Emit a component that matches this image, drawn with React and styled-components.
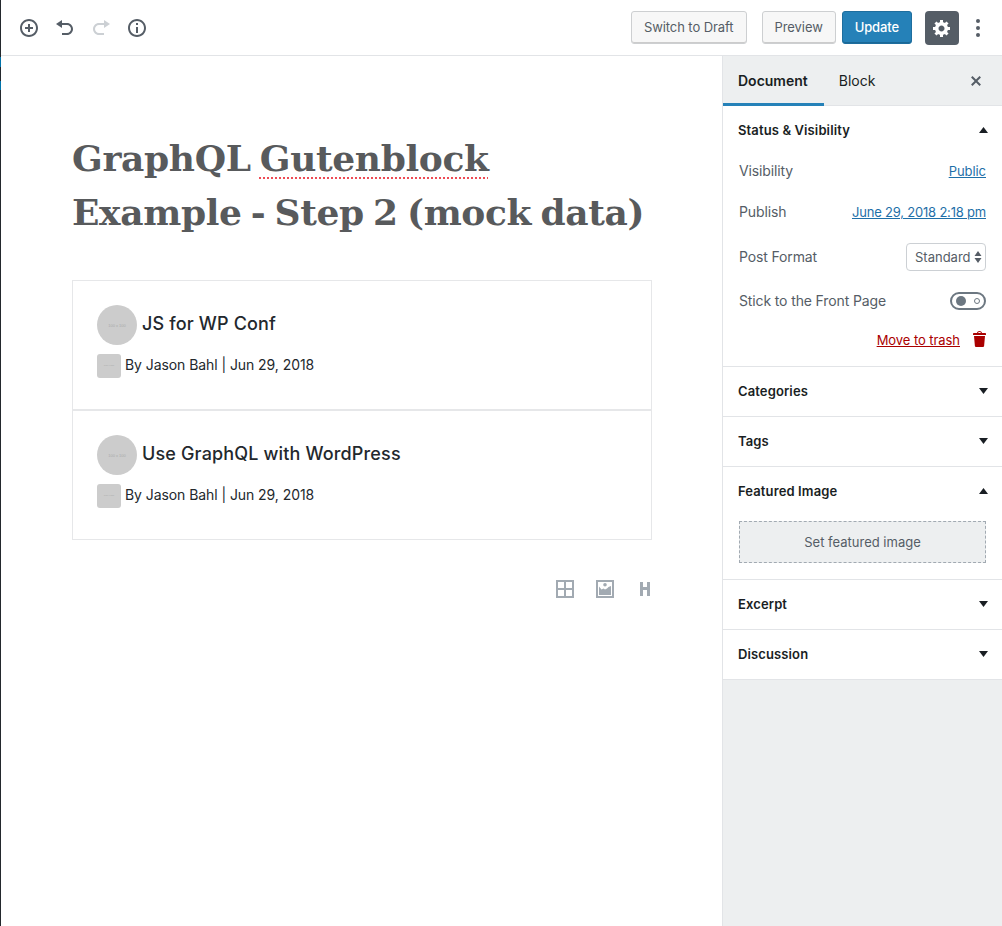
import React from 'react';
import styled, { createGlobalStyle } from 'styled-components';

const GlobalStyle = createGlobalStyle`
  html, body {
    margin: 0;
    padding: 0;
    background: #fff;
  }
  body {
    font-family: Inter, "Noto Sans", sans-serif;
    font-size: 13px;
    color: #191e23;
  }
`;

const Page = styled.div`
  display: flex;
  width: 1002px;
  height: 926px;
  overflow: hidden;
`;

const Rail = styled.div`
  display: flex;
  flex-direction: column;
  flex: 0 0 1px;
`;

const RailPiece = styled.div`
  background: ${(p) => (p.$active ? '#0073aa' : '#23282d')};
  flex: ${(p) => (p.$h ? `0 0 ${p.$h}px` : '1')};
`;

const Main = styled.div`
  display: flex;
  flex-direction: column;
  flex: 1;
  min-width: 0;
`;

const Header = styled.header`
  display: flex;
  align-items: center;
  justify-content: space-between;
  height: 55px;
  border-bottom: 1px solid #e2e4e7;
  padding: 0 22px 0 18px;
  flex: none;
`;

const ToolGroup = styled.div`
  display: flex;
  align-items: center;
  gap: 16px;
`;

const ToolIcon = styled.svg`
  display: block;
  width: 20px;
  height: 20px;
  fill: ${(p) => (p.$off ? '#ccd0d4' : '#555d66')};
`;

const Actions = styled.div`
  display: flex;
  align-items: center;
`;

const Button = styled.div`
  box-sizing: border-box;
  height: 33px;
  line-height: 31px;
  padding: 0 12px;
  border: 1px solid ${(p) => (p.$primary ? '#1e6e9e' : '#cdcfd1')};
  border-radius: 3px;
  background: ${(p) => (p.$primary ? '#2581b8' : '#f7f7f7')};
  box-shadow: inset 0 -1px 0 ${(p) => (p.$primary ? '#1b6896' : '#ccc')};
  color: ${(p) => (p.$primary ? '#fff' : '#555d66')};
  font-size: 13px;
  font-weight: ${(p) => (p.$primary ? 500 : 400)};
  letter-spacing: ${(p) => (p.$primary ? '-0.12px' : '-0.08px')};
  margin-left: ${(p) => p.$ml || 0}px;
  white-space: nowrap;
`;

const GearButton = styled.div`
  display: flex;
  align-items: center;
  justify-content: center;
  width: 34px;
  height: 34px;
  margin-left: 13px;
  border-radius: 4px;
  background: #555d66;

  svg {
    width: 20px;
    height: 20px;
    fill: #fff;
  }
`;

const Dots = styled.div`
  display: flex;
  flex-direction: column;
  gap: 3px;
  margin-left: 17px;
  width: 4px;
`;

const Dot = styled.span`
  width: 4px;
  height: 4px;
  border-radius: 50%;
  background: #555d66;
`;

const Body = styled.div`
  display: flex;
  flex: 1;
  min-height: 0;
`;

const Editor = styled.main`
  flex: 1;
  min-width: 0;
  padding: 75px 70px 0 71px;
`;

const Title = styled.h1`
  margin: 0 0 41px;
  font-family: "DejaVu Serif", "Liberation Serif", serif;
  font-weight: 700;
  font-size: 36px;
  line-height: 54px;
  letter-spacing: -0.35px;
  word-spacing: -3px;
  color: #585a5c;
  white-space: nowrap;
`;

const Misspelled = styled.span`
  text-decoration: underline dotted #ee4b55 2px;
  text-underline-offset: 6px;
`;

const Card = styled.article`
  box-sizing: border-box;
  height: 130px;
  padding: 24px;
  border: 1px solid #e6e7e9;
`;

const CardHead = styled.div`
  display: flex;
  align-items: flex-start;
  gap: 5px;
`;

const Avatar = styled.div`
  display: flex;
  align-items: center;
  justify-content: center;
  flex: none;
  width: ${(p) => p.$size}px;
  height: ${(p) => p.$size}px;
  border-radius: ${(p) => (p.$round ? '50%' : '3px')};
  background: #ccc;
  color: #aaa;
  font-family: "Liberation Sans", sans-serif;
  font-size: ${(p) => (p.$round ? 4 : 2.5)}px;
`;

const CardTitle = styled.h2`
  margin: 0;
  font-size: 18px;
  font-weight: 500;
  line-height: 38px;
  letter-spacing: 0.15px;
  color: #23282d;
`;

const CardMeta = styled.div`
  display: flex;
  align-items: center;
  gap: 4px;
  margin-top: 9px;
  font-size: 14px;
  line-height: 22px;
  letter-spacing: -0.07px;
  color: #23282d;
`;

const MetaText = styled.span`
  padding-bottom: 2px;
`;

const BlockTools = styled.div`
  display: flex;
  justify-content: flex-end;
  align-items: center;
  margin: 39px -3px 0 0;
`;

const BlockIcon = styled.svg`
  display: block;
  width: 20px;
  height: 20px;
  margin-left: ${(p) => p.$ml || 0}px;
  fill: #a2aab2;
`;

const Sidebar = styled.aside`
  display: flex;
  flex-direction: column;
  flex: 0 0 279px;
  border-left: 1px solid #e2e4e7;
  background: #edeff0;
`;

const Tabs = styled.div`
  display: flex;
  align-items: stretch;
  height: 49px;
  border-bottom: 1px solid #e2e4e7;
  flex: none;
`;

const Tab = styled.div`
  display: flex;
  align-items: center;
  box-sizing: border-box;
  padding: 1px ${(p) => (p.$active ? 16 : 15)}px 0 15px;
  height: 50px;
  border-bottom: 3px solid ${(p) => (p.$active ? '#2581b8' : 'transparent')};
  font-size: 14px;
  font-weight: ${(p) => (p.$active ? 600 : 400)};
  color: #191e23;
`;

const CloseIcon = styled.svg`
  width: 20px;
  height: 20px;
  margin: 15px 16px 0 auto;
  fill: #555d66;
`;

const Panel = styled.section`
  background: #fff;
  border-bottom: 1px solid #e2e4e7;
  flex: none;
`;

const PanelHead = styled.div`
  display: flex;
  align-items: center;
  justify-content: space-between;
  box-sizing: border-box;
  height: 49px;
  padding: 0 14px 2px 15px;
  font-size: 13px;
  font-weight: 600;
  letter-spacing: 0.12px;
  color: #191e23;
`;

const Arrow = styled.svg`
  width: 9px;
  height: 6px;
  fill: #191e23;
  transform: ${(p) => (p.$up ? 'none' : 'rotate(180deg)')};
`;

const Rows = styled.div`
  padding: 0 16px 11px 16px;
`;

const Row = styled.div`
  display: flex;
  align-items: center;
  justify-content: ${(p) => (p.$end ? 'flex-end' : 'space-between')};
  height: ${(p) => p.$h}px;
`;

const Label = styled.span`
  padding-bottom: 2px;
  font-size: 14px;
  letter-spacing: -0.13px;
  color: #555d66;
`;

const Link = styled.a`
  color: ${(p) => (p.$danger ? '#a00' : '#1e6fa8')};
  font-size: 13px;
  letter-spacing: ${(p) => (p.$tight ? '-0.2px' : '-0.06px')};
  text-decoration: underline;
`;

const Select = styled.div`
  display: flex;
  align-items: center;
  justify-content: space-between;
  box-sizing: border-box;
  width: 80px;
  height: 28px;
  padding: 0 3px 1px 8px;
  border: 1px solid #ccd0d4;
  border-radius: 4px;
  font-size: 13px;
  color: #555d66;

  svg {
    width: 8px;
    height: 12px;
    fill: #555d66;
  }
`;

const Toggle = styled.div`
  display: flex;
  align-items: center;
  justify-content: space-between;
  box-sizing: border-box;
  width: 36px;
  height: 18px;
  padding: 0 4px;
  border: 2px solid #6c7781;
  border-radius: 9px;
`;

const ToggleKnob = styled.span`
  width: 10px;
  height: 10px;
  border-radius: 50%;
  background: #6c7781;
`;

const ToggleMark = styled.span`
  box-sizing: border-box;
  width: 6px;
  height: 6px;
  border: 1.5px solid #6c7781;
  border-radius: 50%;
`;

const TrashIcon = styled.svg`
  width: 20px;
  height: 20px;
  margin: -3px -4px 0 10px;
  fill: #a00;
`;

const ImageSlot = styled.div`
  box-sizing: border-box;
  height: 42px;
  margin: 5px 16px 16px;
  border: 1px dashed #a2aab2;
  background: #edeff0;
  color: #555d66;
  text-align: center;
  line-height: 40px;
`;

const paths = {
  plus: 'M10 1c-5 0-9 4-9 9s4 9 9 9 9-4 9-9-4-9-9-9zm0 16c-3.9 0-7-3.1-7-7s3.1-7 7-7 7 3.1 7 7-3.1 7-7 7zm1-11H9v3H6v2h3v3h2v-3h3V9h-3V6z',
  undo: 'M12 5H7V2L1 6l6 4V7h5c2.2 0 4 1.8 4 4s-1.8 4-4 4H7v2h5c3.3 0 6-2.7 6-6s-2.7-6-6-6z',
  redo: 'M8 5h5V2l6 4-6 4V7H8c-2.2 0-4 1.8-4 4s1.8 4 4 4h5v2H8c-3.3 0-6-2.7-6-6s2.7-6 6-6z',
  info: 'M10 1c-5 0-9 4-9 9s4 9 9 9 9-4 9-9-4-9-9-9zm0 16c-3.9 0-7-3.1-7-7s3.1-7 7-7 7 3.1 7 7-3.1 7-7 7zM9 5h2v2H9V5zm0 4h2v6H9V9z',
  gear: 'M18 12h-2.18c-.17.7-.44 1.35-.81 1.93l1.54 1.54-2.1 2.1-1.54-1.54c-.58.36-1.23.63-1.91.79V19H8v-2.18c-.68-.16-1.33-.43-1.91-.79l-1.54 1.54-2.12-2.12 1.54-1.54c-.36-.58-.63-1.23-.79-1.91H1V9.03h2.17c.16-.7.44-1.35.8-1.94L2.43 5.55l2.1-2.1 1.54 1.54c.58-.37 1.24-.64 1.93-.81V2h3v2.18c.68.16 1.33.43 1.91.79l1.54-1.54 2.12 2.12-1.54 1.54c.36.59.64 1.24.8 1.94H18V12zm-8.5 1.5c1.66 0 3-1.34 3-3s-1.34-3-3-3-3 1.34-3 3 1.34 3 3 3z',
  close: 'M14.95 6.46L11.41 10l3.54 3.54-1.41 1.41L10 11.42l-3.53 3.53-1.42-1.42L8.58 10 5.05 6.47l1.42-1.42L10 8.58l3.54-3.53z',
  trash: 'M12 4h3c.6 0 1 .4 1 1v1H3V5c0-.6.5-1 1-1h3c.2-1.1 1.3-2 2.5-2s2.3.9 2.5 2zM8 4h3c-.2-.6-.9-1-1.5-1S8.2 3.4 8 4zM4 7h11l-.9 10.1c0 .5-.5.9-1 .9H5.9c-.5 0-.9-.4-1-.9L4 7z',
  table: 'M1 1h18v18H1V1zm2 2v6h6V3H3zm8 0v6h6V3h-6zM3 11v6h6v-6H3zm8 0v6h6v-6h-6z',
  image: 'M1 1h18v18H1V1zm2 2v14h14V3H3zM10 7.500a1.800 1.800 0 1 1 0-3.600 1.800 1.800 0 0 1 0 3.600zM4 16V7.500l2.500 3 2-1 1.500 1 2-1 1.500-1.500 2.500-1V16H4z',
  heading: 'M5 3h3v5h4V3h3v14h-3v-6H8v6H5V3z',
};

const Arrowhead = ({ up }) => (
  <Arrow $up={up} viewBox="0 0 9 6">
    <path d="M4.500 0L9 6H0z" />
  </Arrow>
);

const CollapsedPanel = ({ title }) => (
  <Panel>
    <PanelHead>
      {title}
      <Arrowhead />
    </PanelHead>
  </Panel>
);

const PostCard = ({ title }) => (
  <Card>
    <CardHead>
      <Avatar $size={40} $round>100 x 100</Avatar>
      <CardTitle>{title}</CardTitle>
    </CardHead>
    <CardMeta>
      <Avatar $size={24}>100 x 100</Avatar>
      <MetaText>By Jason Bahl | Jun 29, 2018</MetaText>
    </CardMeta>
  </Card>
);

const App = () => (
  <Page>
    <GlobalStyle />
    <Rail>
      <RailPiece $h={57} />
      <RailPiece $h={10} $active />
      <RailPiece $h={14} />
      <RailPiece $h={9} $active />
      <RailPiece />
    </Rail>
    <Main>
      <Header>
        <ToolGroup>
          <ToolIcon viewBox="0 0 20 20"><path d={paths.plus} /></ToolIcon>
          <ToolIcon viewBox="0 0 20 20"><path d={paths.undo} /></ToolIcon>
          <ToolIcon viewBox="0 0 20 20" $off><path d={paths.redo} /></ToolIcon>
          <ToolIcon viewBox="0 0 20 20"><path d={paths.info} /></ToolIcon>
        </ToolGroup>
        <Actions>
          <Button>Switch to Draft</Button>
          <Button $ml={15}>Preview</Button>
          <Button $ml={6} $primary>Update</Button>
          <GearButton>
            <svg viewBox="0 0 20 20"><path d={paths.gear} /></svg>
          </GearButton>
          <Dots>
            <Dot />
            <Dot />
            <Dot />
          </Dots>
        </Actions>
      </Header>
      <Body>
        <Editor>
          <Title>
            GraphQL <Misspelled>Gutenblock</Misspelled>
            <br />
            Example - Step 2 (mock data)
          </Title>
          <PostCard title="JS for WP Conf" />
          <PostCard title="Use GraphQL with WordPress" />
          <BlockTools>
            <BlockIcon viewBox="0 0 20 20"><path d={paths.table} /></BlockIcon>
            <BlockIcon viewBox="0 0 20 20" $ml={20}><path d={paths.image} /></BlockIcon>
            <BlockIcon viewBox="0 0 20 20" $ml={20}><path d={paths.heading} /></BlockIcon>
          </BlockTools>
        </Editor>
        <Sidebar>
          <Tabs>
            <Tab $active>Document</Tab>
            <Tab>Block</Tab>
            <CloseIcon viewBox="0 0 20 20"><path d={paths.close} /></CloseIcon>
          </Tabs>
          <Panel>
            <PanelHead>
              Status &amp; Visibility
              <Arrowhead up />
            </PanelHead>
            <Rows>
              <Row $h={32}>
                <Label>Visibility</Label>
                <Link>Public</Link>
              </Row>
              <Row $h={50}>
                <Label>Publish</Label>
                <Link $tight>June 29, 2018 2:18 pm</Link>
              </Row>
              <Row $h={40}>
                <Label>Post Format</Label>
                <Select>
                  Standard
                  <svg viewBox="0 0 8 12"><path d="M4 0l3.500 5H.5zM4 12L.5 7h7z" /></svg>
                </Select>
              </Row>
              <Row $h={48}>
                <Label>Stick to the Front Page</Label>
                <Toggle>
                  <ToggleKnob />
                  <ToggleMark />
                </Toggle>
              </Row>
              <Row $h={30} $end>
                <Link $danger>Move to trash</Link>
                <TrashIcon viewBox="0 0 20 20"><path d={paths.trash} /></TrashIcon>
              </Row>
            </Rows>
          </Panel>
          <CollapsedPanel title="Categories" />
          <CollapsedPanel title="Tags" />
          <Panel>
            <PanelHead>
              Featured Image
              <Arrowhead up />
            </PanelHead>
            <ImageSlot>Set featured image</ImageSlot>
          </Panel>
          <CollapsedPanel title="Excerpt" />
          <CollapsedPanel title="Discussion" />
        </Sidebar>
      </Body>
    </Main>
  </Page>
);

export default App;
